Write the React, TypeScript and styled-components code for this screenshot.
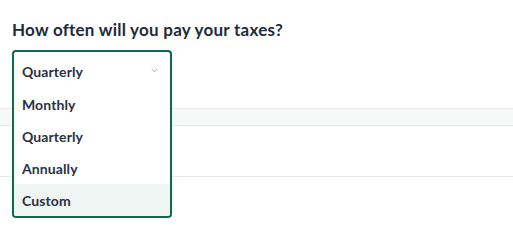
import React, { useState } from 'react';
import styled, { createGlobalStyle } from 'styled-components';

const GlobalStyle = createGlobalStyle`
  body {
    margin: 0;
    background: #ffffff;
    font-family: 'Lato', 'Noto Sans', sans-serif;
    color: #242b3c;
  }
`;

const options = ['Monthly', 'Quarterly', 'Annually', 'Custom'];

const App = () => {
  const [selected] = useState<string>('Quarterly');
  const [hovered, setHovered] = useState<string>('Custom');

  return (
    <>
      <GlobalStyle />
      <Page>
        <Header>
          <Title>How often will you pay your taxes?</Title>
          <SelectWrap>
            <Trigger type="button" aria-expanded="true">
              <span>{selected}</span>
              <Chevron viewBox="0 0 8 5" aria-hidden="true">
                <path d="M1 1l3 3 3-3" fill="none" stroke="#9aa0a8" strokeWidth="1" strokeLinecap="round" />
              </Chevron>
            </Trigger>
            <Menu role="listbox">
              {options.map(o => (
                <Option key={o} $active={o === hovered} onMouseEnter={() => setHovered(o)}>
                  {o}
                </Option>
              ))}
            </Menu>
          </SelectWrap>
        </Header>
        <Rows>
          <Row $height={16} $shaded />
          <Row $height={50} />
        </Rows>
      </Page>
    </>
  );
};

export default App;

const Page = styled.div`
  width: 513px;
  min-height: 228px;
`;

const Header = styled.div`
  padding: 20px 12px 0;
  display: flex;
  flex-direction: column;
  gap: 10px;
  position: relative;
  z-index: 1;
`;

const Title = styled.h2`
  margin: 0;
  font-size: 17px;
  line-height: 20px;
  font-weight: 700;
  letter-spacing: 0.25px;
  color: #232a3b;
`;

const SelectWrap = styled.div`
  position: relative;
  width: 160px;
`;

const Trigger = styled.button`
  width: 160px;
  height: 38px;
  box-sizing: border-box;
  display: flex;
  align-items: center;
  justify-content: space-between;
  padding: 2px 10px 0 8px;
  border: 2px solid #0b6b4e;
  border-bottom: none;
  border-radius: 4px 4px 0 0;
  background: #fff;
  font-family: inherit;
  font-size: 14px;
  font-weight: 700;
  letter-spacing: 0.1px;
  color: #2a3144;
  cursor: pointer;
`;

const Chevron = styled.svg`
  width: 7px;
  height: 5px;
  margin-top: -2px;
  margin-right: 2px;
`;

const Menu = styled.ul`
  position: absolute;
  top: 100%;
  left: 0;
  width: 160px;
  box-sizing: border-box;
  margin: 0;
  padding: 0;
  list-style: none;
  border: 2px solid #0b6b4e;
  border-top: none;
  border-radius: 0 0 4px 4px;
  background: #fff;
  overflow: hidden;
`;

const Option = styled.li<{ $active?: boolean }>`
  height: 32px;
  display: flex;
  align-items: center;
  padding: 0 8px;
  font-size: 14px;
  font-weight: 700;
  letter-spacing: 0.1px;
  color: #2a3144;
  background: ${p => (p.$active ? '#eff5f3' : '#fff')};
  cursor: pointer;
`;

const Rows = styled.div`
  margin-top: 20px;
`;

const Row = styled.div<{ $height: number; $shaded?: boolean }>`
  height: ${p => p.$height}px;
  border-top: ${p => (p.$shaded ? '1px solid #e6e9ea' : 'none')};
  border-bottom: 1px solid #e6e9ea;
  background: ${p => (p.$shaded ? '#f7f8f8' : '#fff')};
`;
